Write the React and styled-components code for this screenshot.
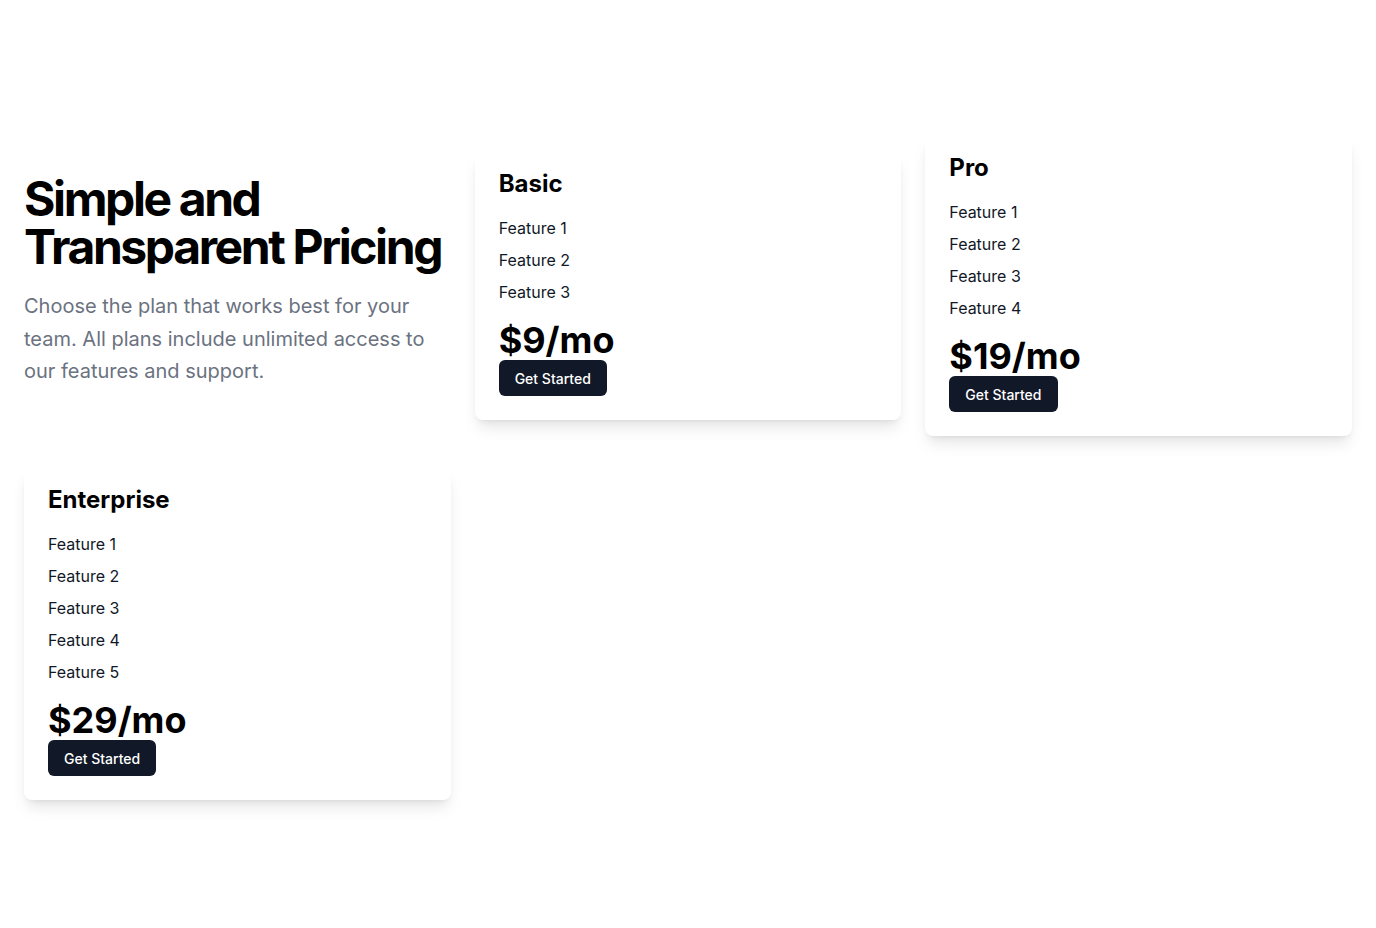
import React from "react";
import styled, { createGlobalStyle } from "styled-components";

const GlobalStyle = createGlobalStyle`
 * { box-sizing: border-box; }
 body {
  margin: 0;
  background: #ffffff;
  font-family: "Inter", "Liberation Sans", sans-serif;
  color: #000000;
 }
`;

const plans = [
 { name: "Basic", features: ["Feature 1", "Feature 2", "Feature 3"], price: "$9/mo" },
 { name: "Pro", features: ["Feature 1", "Feature 2", "Feature 3", "Feature 4"], price: "$19/mo" },
 {
  name: "Enterprise",
  features: ["Feature 1", "Feature 2", "Feature 3", "Feature 4", "Feature 5"],
  price: "$29/mo",
 },
];

const App = () => {
 return (
  <>
   <GlobalStyle />
   <Page>
    <Grid>
     <Hero>
      <h1>Simple and Transparent Pricing</h1>
      <p>
       Choose the plan that works best for your team. All plans include unlimited access to our
       features and support.
      </p>
     </Hero>
     {plans.map((plan) => (
      <Card key={plan.name}>
       <PlanName>{plan.name}</PlanName>
       <FeatureList>
        {plan.features.map((f) => (
         <li key={f}>{f}</li>
        ))}
       </FeatureList>
       <Price>{plan.price}</Price>
       <Button>Get Started</Button>
      </Card>
     ))}
    </Grid>
   </Page>
  </>
 );
};

const Page = styled.main`
 min-height: 100vh;
 display: flex;
 flex-direction: column;
 justify-content: center;
 padding: 32px 24px 24px;
`;

const Grid = styled.div`
 display: grid;
 grid-template-columns: repeat(3, 1fr);
 column-gap: 24px;
 row-gap: 32px;
 align-items: center;
`;

const Hero = styled.div`
 padding-bottom: 9px;

 h1 {
  margin: 0;
  font-size: 48px;
  line-height: 48px;
  font-weight: 700;
  letter-spacing: -0.05em;
  color: #000;
 }

 p {
  margin: 19px 0 0;
  font-size: 20px;
  line-height: 1.625;
  color: #6b7280;
 }
`;

const Card = styled.div`
 background: #fff;
 border-radius: 8px;
 padding: 16px 24px 24px;
 box-shadow: 0 10px 15px -3px rgba(0, 0, 0, 0.1), 0 4px 6px -4px rgba(0, 0, 0, 0.1);
`;

const PlanName = styled.h3`
 margin: 0;
 font-size: 24px;
 line-height: 32px;
 font-weight: 700;
 color: #000;
`;

const FeatureList = styled.ul`
 list-style: none;
 margin: 16px 0 0;
 padding: 0;
 display: flex;
 flex-direction: column;
 gap: 8px;

 li {
  font-size: 16px;
  line-height: 24px;
  color: #111827;
 }
`;

const Price = styled.div`
 margin-top: 16px;
 font-size: 36px;
 line-height: 40px;
 font-weight: 700;
 color: #000;
`;

const Button = styled.button`
 display: inline-block;
 height: 36px;
 padding: 0 16px;
 border: none;
 border-radius: 6px;
 background: #111827;
 color: #fff;
 font-family: "Inter", "Liberation Sans", sans-serif;
 font-size: 14px;
 font-weight: 500;
 cursor: pointer;
`;

export default App;
